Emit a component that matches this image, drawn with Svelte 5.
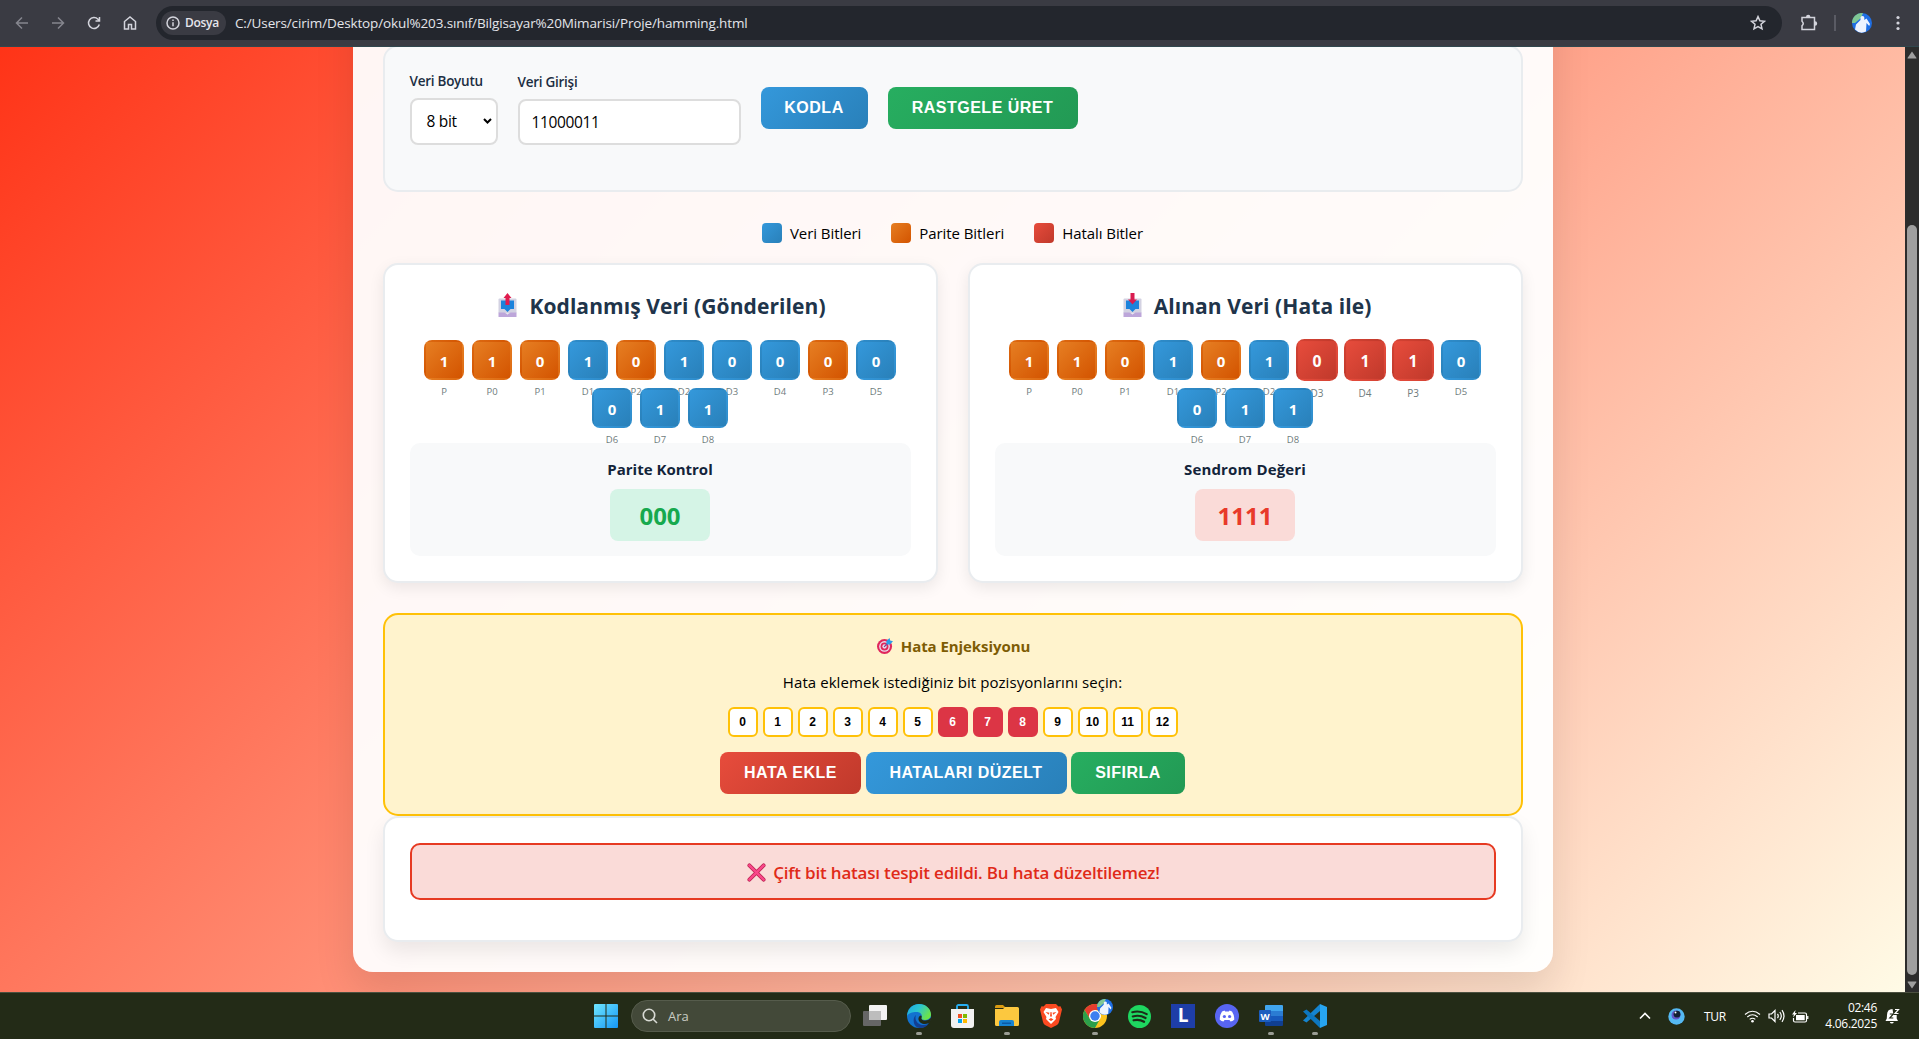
<script>
  const sent = [
    ['1', 'P'], ['1', 'P0'], ['0', 'P1'], ['1', 'D1'], ['0', 'P2'], ['1', 'D2'], ['0', 'D3'],
    ['0', 'D4'], ['0', 'P3'], ['0', 'D5'], ['0', 'D6'], ['1', 'D7'], ['1', 'D8']
  ];
  const received = [
    ['1', 'P'], ['1', 'P0'], ['0', 'P1'], ['1', 'D1'], ['0', 'P2'], ['1', 'D2'], ['0', 'D3'],
    ['1', 'D4'], ['1', 'P3'], ['0', 'D5'], ['0', 'D6'], ['1', 'D7'], ['1', 'D8']
  ];
  let errors = $state([6, 7, 8]);
  const positions = Array.from({ length: 13 }, (_, i) => i);
  const toggle = (i) => (errors = errors.includes(i) ? errors.filter((e) => e !== i) : [...errors, i]);
</script>

{#snippet tray(down)}
  <svg class="tray" width="19" height="24" viewBox="0 0 19 24">
    <rect x=".5" y="5.500" width="18" height="15" rx="1" fill="#d3d2e2" />
    <path d="M3 7.500h13v8.500h-3.500L9.500 19l-3-3H3z" fill="#1c83dc" />
    <path d="M.5 19.500h6l3 2 3-2h6V24H.5z" fill="#bda6da" />
    {#if down}
      <path d="M7.500 0h4v6.500h2.500l-4.500 5-4.500-5h2.500z" fill="#d91c50" />
    {:else}
      <path d="M9.500 0l4 5h-2v7h-4V5h-2z" fill="#e01c4e" />
    {/if}
  </svg>
{/snippet}

{#snippet bits(list, wrong)}
  <div class="bits">
    {#each list as [value, name], i}
      <div class="bit {name[0] === 'P' ? 'parity' : 'data'}" class:error={wrong.includes(i)}>
        {value}<span>{name}</span>
      </div>
    {/each}
  </div>
{/snippet}

{#snippet avatar(size)}
  <svg width={size} height={size} viewBox="0 0 20 20" stroke="none">
    <circle cx="10" cy="10" r="10" fill="#1f6fe5" />
    <path d="M0 10A10 10 0 0 1 11 0L9 5 3 10z" fill="#7fc794" />
    <path d="M3 16.500l1-5L7.500 8l1-1V4.500a2 2 0 0 1 3.800 0V7l2.200-1.500 3.500 5.500-.8 2-2.700-3-.5 8.500q-6 3-11-2z" fill="#eef4ff" />
  </svg>
{/snippet}

<div class="screen">
  <header class="toolbar">
    <div class="nav">
      <svg class="dim" width="16" height="16" viewBox="0 0 16 16"><path d="M14 8H3M8 2.500L2.500 8 8 13.500" /></svg>
      <svg class="dim" width="16" height="16" viewBox="0 0 16 16"><path d="M2 8h11M8 2.500L13.500 8 8 13.500" /></svg>
      <svg width="16" height="16" viewBox="0 0 16 16"><path d="M13.300 9.500A5.500 5.500 0 1 1 12 4.200L13.500 5.800M13.500 2v4h-4" /></svg>
      <svg width="16" height="16" viewBox="0 0 16 16"><path d="M2.500 14V6.500L8 2l5.500 4.500V14h-4V9.500h-3V14z" /></svg>
    </div>
    <div class="address">
      <span class="chip">
        <svg width="14" height="14" viewBox="0 0 14 14"><circle cx="7" cy="7" r="6" /><path d="M7 6.200v4M7 3.600v1.500" /></svg>
        <b>Dosya</b>
      </span>
      <span class="url">C:/Users/cirim/Desktop/okul%203.sınıf/Bilgisayar%20Mimarisi/Proje/hamming.html</span>
      <svg class="star" width="16" height="16" viewBox="0 0 16 16"><path d="M8 1.600l1.900 4.200 4.500.5-3.400 3 1 4.500L8 11.500l-4 2.300 1-4.500-3.400-3 4.500-.5z" /></svg>
    </div>
    <div class="tools">
      <svg width="18" height="18" viewBox="0 0 18 18"><path d="M2 3.500h12.500v12H2v-3.700q2.500-2.300 0-4.600z" /><path class="solid" d="M6 3a2.200 2.200 0 0 1 4.400 0zM15 7.300a2.200 2.200 0 0 1 0 4.400z" /></svg>
      <i class="rule"></i>
      <span class="profile">{@render avatar(20)}</span>
      <svg class="dots" width="4" height="16" viewBox="0 0 4 16"><circle cx="2" cy="2.500" r="1.600" /><circle cx="2" cy="8" r="1.600" /><circle cx="2" cy="13.500" r="1.600" /></svg>
    </div>
  </header>

  <div class="viewport">
    <div class="page">
      <main class="container">
        <section class="controls">
          <div class="field size">
            <label for="size">Veri Boyutu</label>
            <div class="select" id="size">
              <span>8 bit</span>
              <svg width="9" height="6" viewBox="0 0 9 6"><path d="M1 1l3.500 3.500L8 1" /></svg>
            </div>
          </div>
          <div class="field entry">
            <label for="entry">Veri Girişi</label>
            <input id="entry" type="text" value="11000011" />
          </div>
          <button class="btn blue kodla">KODLA</button>
          <button class="btn green random">RASTGELE ÜRET</button>
        </section>

        <div class="legend">
          <div><i class="data"></i><span>Veri Bitleri</span></div>
          <div><i class="parity"></i><span>Parite Bitleri</span></div>
          <div><i class="error"></i><span>Hatalı Bitler</span></div>
        </div>

        <div class="cards">
          <section class="card">
            <h3>{@render tray(false)}<span>Kodlanmış Veri (Gönderilen)</span></h3>
            {@render bits(sent, [])}
            <div class="info">
              <h4>Parite Kontrol</h4>
              <div class="value ok">000</div>
            </div>
          </section>
          <section class="card">
            <h3>{@render tray(true)}<span>Alınan Veri (Hata ile)</span></h3>
            {@render bits(received, errors)}
            <div class="info">
              <h4 class="syndrome">Sendrom Değeri</h4>
              <div class="value bad">1111</div>
            </div>
          </section>
        </div>

        <section class="injection">
          <h4>
            <svg width="16" height="16" viewBox="0 0 17 17">
              <circle cx="8" cy="9" r="8" fill="#e0275c" /><circle cx="8" cy="9" r="5.700" fill="#e9dcec" />
              <circle cx="8" cy="9" r="4.200" fill="#e0275c" /><circle cx="8" cy="9" r="2.300" fill="#e9dcec" />
              <path d="M7.500 9.500l5-5" stroke="#7a3b8c" stroke-width="1.200" />
              <path d="M10 7V3.200L13.300 0l.7 2.600L17 3.500 13.800 7z" fill="#2c9be8" />
            </svg>
            <span>Hata Enjeksiyonu</span>
          </h4>
          <p><span>Hata eklemek istediğiniz bit pozisyonlarını seçin:</span></p>
          <div class="positions">
            {#each positions as i}
              <button class:on={errors.includes(i)} onclick={() => toggle(i)}>{i}</button>
            {/each}
          </div>
          <div class="actions">
            <button class="btn red inject">HATA EKLE</button>
            <button class="btn blue fix">HATALARI DÜZELT</button>
            <button class="btn green reset">SIFIRLA</button>
          </div>
        </section>

        <section class="result">
          <div class="alert">
            <svg width="19" height="19" viewBox="0 0 20 20"><path d="M2.500 2.500l15 15M17.500 2.500l-15 15" stroke="#b81f4c" stroke-width="4" stroke-linecap="round" /><path d="M2.500 2.500l15 15M17.500 2.500l-15 15" stroke="#f9478a" stroke-width="2.600" stroke-linecap="round" /></svg>
            <span>Çift bit hatası tespit edildi. Bu hata düzeltilemez!</span>
          </div>
        </section>
      </main>
    </div>
    <div class="scrollbar">
      <svg width="10" height="8" viewBox="0 0 10 8"><path d="M5 .5L9.500 7q0 .5-.5.5H1q-.5 0-.5-.5z" /></svg>
      <i></i>
      <svg width="10" height="8" viewBox="0 0 10 8"><path d="M5 7.500L9.500 1q0-.5-.5-.5H1Q.5.500.5 1z" /></svg>
    </div>
  </div>

  <footer class="taskbar">
    <div class="apps">
      <svg class="win" width="24" height="24" viewBox="0 0 24 24">
        <defs><linearGradient id="wing" x1="0" y1="0" x2="1" y2="1" gradientUnits="objectBoundingBox"><stop offset="0" stop-color="#6fe6ff" /><stop offset="1" stop-color="#1596f5" /></linearGradient></defs>
        <path d="M0 1q0-1 1-1h10.500v11.500H0zM12.500 0H23q1 0 1 1v10.500H12.500zM0 12.500h11.500V24H1q-1 0-1-1zM12.500 12.500H24V23q0 1-1 1H12.500z" fill="url(#wing)" />
      </svg>
      <div class="search">
        <svg width="16" height="16" viewBox="0 0 16 16"><circle cx="7" cy="7" r="5.700" /><path d="M11 11l4 4" /></svg>
        <span>Ara</span>
      </div>
      <div class="app">
        <svg width="24" height="24" viewBox="0 0 24 24"><rect x="0" y="7" width="18" height="15" rx="1" fill="#666" /><rect x="6" y="1" width="18" height="15" rx="1" fill="#f3f3f3" /><path d="M6 7h12v9H6z" fill="#bdbdbd" /></svg>
      </div>
      <div class="app open">
        <svg width="24" height="24" viewBox="0 0 24 24">
          <defs><linearGradient id="edgeg" x1="0" y1="0" x2="1" y2=".5"><stop offset="0" stop-color="#1ba7e5" /><stop offset=".5" stop-color="#2cc5cf" /><stop offset="1" stop-color="#6be34a" /></linearGradient></defs>
          <circle cx="12" cy="12" r="12" fill="#1272cf" />
          <path d="M.3 10C1.500 3.500 6.500 0 12 0c7 0 12 5 12 10.500 0 3.500-2.800 5.500-6 5.500-2.500 0-4-1-3.500-2.200.8-1.500.5-5.800-5-5.800C5 8 1.500 9 .3 12z" fill="url(#edgeg)" />
          <path d="M9 11c-2 5 2 10 7.500 10 2.500 0 4.500-1 5.500-2-2 4-6 5-9 5C6 24 5 14 9 11z" fill="#123f93" />
          <path d="M14.500 13.800c-.6 1.500 1 2.700 4 2.700 2 0 3.500-.7 5-2.500 1 0 .5 3.500-1.500 5-5 2.500-10 0-10.500-3.500-.3-2 1-4 2.500-4 .8.500.8 1.500.5 2.300z" fill="#232b17" />
        </svg>
      </div>
      <div class="app">
        <svg width="24" height="24" viewBox="0 0 24 24"><path d="M6 6V2.500Q6 1 7.500 1h8Q17 1 17 2.500V6" fill="none" stroke="#27aef2" stroke-width="1.800" /><path d="M0 5h23v16q0 3-3 3H3q-3 0-3-3z" fill="#f2f2f2" /><path d="M7 10h4v4H7z" fill="#f25022" /><path d="M12 10h4v4h-4z" fill="#7fba00" /><path d="M7 15h4v4H7z" fill="#00a4ef" /><path d="M12 15h4v4h-4z" fill="#ffb900" /></svg>
      </div>
      <div class="app open">
        <svg width="24" height="24" viewBox="0 0 24 24"><path d="M0 2.500Q0 1 1.500 1H8l3 3H0z" fill="#d89a12" /><path d="M0 5h8l2-2h12.500Q24 3 24 4.500v16q0 1.500-1.500 1.500h-21Q0 22 0 20.500z" fill="#fcc83f" /><path d="M4 22v-4q0-2 2-2h11q2 0 2 2v4z" fill="#1784d1" /><path d="M7 18.500h9V20H7z" fill="#0b5aa5" /></svg>
      </div>
      <div class="app">
        <svg width="22" height="24" viewBox="0 0 22 24"><path d="M6 0h10l2.500 2.500 2-.3L22 5.500 19 18q-.5 2-2 3l-6 3-6-3q-1.500-1-2-3L0 5.500l1.500-3.300 2 .3z" fill="#fb4a21" /><path d="M6 4l5 1 5-1 2.500 4-3 5 .5 2-5 5-5-5 .5-2-3-5z" fill="#fff" /><path d="M5.500 8l4 .8-.8 2zM16.500 8l-4 .8.8 2zM8.500 15.500L11 14l2.500 1.500L11 17zM10.500 8h1l.5 4.500h-2z" fill="#fb4a21" /></svg>
      </div>
      <div class="app open">
        <svg width="24" height="24" viewBox="0 0 24 24"><circle cx="12" cy="12" r="12" fill="#fcc31e" /><path d="M1.600 6A12 12 0 0 1 22.400 6H12L7 15z" fill="#e53c2f" /><path d="M1.600 6A12 12 0 0 0 12 24l5-9H7z" fill="#2c9f4b" /><circle cx="12" cy="12" r="6" fill="#fff" /><circle cx="12" cy="12" r="4.700" fill="#3c7ff0" /></svg>
        <span class="badge">{@render avatar(16)}</span>
      </div>
      <div class="app">
        <svg width="23" height="23" viewBox="0 0 24 24"><circle cx="12" cy="12" r="12" fill="#1ed760" /><path d="M4.500 7.500q8-2 15 2M5 12q7-2 13.300 1.600M5.800 16q6-1.500 11 1.500" fill="none" stroke="#1c2b18" stroke-width="2.200" stroke-linecap="round" /></svg>
      </div>
      <div class="app"><span class="letter">L</span></div>
      <div class="app">
        <svg width="24" height="24" viewBox="0 0 24 24"><circle cx="12" cy="12" r="12" fill="#5865f2" /><path d="M9.500 6.500L7 7.500Q4.500 11.500 4.800 15.800 6.500 17.200 8.500 17.500l1-1.500h5l1 1.500q2-.3 3.700-1.700.3-4.300-2.200-8.300l-2.500-1-.6 1h-3.800z" fill="#fff" /><circle cx="9.400" cy="12.500" r="1.600" fill="#5865f2" /><circle cx="14.600" cy="12.500" r="1.600" fill="#5865f2" /></svg>
      </div>
      <div class="app open">
        <svg width="24" height="24" viewBox="0 0 24 24"><path d="M6 2q0-1 1-1h16q1 0 1 1v5H6z" fill="#41a5ee" /><path d="M6 7h18v5H6z" fill="#2b7cd3" /><path d="M6 12h18v5H6z" fill="#185abd" /><path d="M6 17h18v4q0 1-1 1H7q-1 0-1-1z" fill="#103f91" /><rect x="0" y="6" width="12" height="12" rx="1" fill="#1b5dbe" /><text x="6" y="15.500" text-anchor="middle">W</text></svg>
      </div>
      <div class="app open">
        <svg width="24" height="24" viewBox="0 0 24 24"><path d="M17 0l7 3v18l-7 3z" fill="#27a5f0" /><path d="M17 0v7L3.500 18.500 0 16.500z" fill="#1584cf" /><path d="M17 24v-7L3.500 5.500 0 7.500z" fill="#0d76bf" /></svg>
      </div>
    </div>
    <div class="system">
      <svg width="12" height="8" viewBox="0 0 12 8"><path d="M1 6.500l5-5 5 5" stroke-width="1.600" /></svg>
      <svg class="orb" width="17" height="17" viewBox="0 0 17 17"><circle cx="8.500" cy="8.500" r="8.200" fill="#55b9f3" /><circle cx="8" cy="7" r="4.500" fill="#6256c9" /><circle cx="9" cy="6.200" r="3.400" fill="#121f33" /><circle cx="7.500" cy="4.500" r="1" fill="#fff" /></svg>
      <span class="lang">TUR</span>
      <svg class="wifi" width="17" height="13" viewBox="0 0 17 13"><path d="M1 4.500q7.500-6.500 15 0M3.300 7q5.200-4.500 10.400 0M5.700 9.400q2.800-2.300 5.600 0" /><circle cx="8.500" cy="11.300" r="1.300" fill="#fff" stroke="none" /></svg>
      <svg class="vol" width="17" height="14" viewBox="0 0 17 14"><path d="M1 5v4h2.500L7 12.500v-11L3.500 5zM9.500 4.800q1.500 2.200 0 4.400M11.800 3q3 4 0 8M14 1.200q4 5.800 0 11.600" /></svg>
      <svg class="bat" width="17" height="13" viewBox="0 0 17 13"><path d="M6 3h7q1.500 0 1.500 1.500v6q0 1.500-1.500 1.500H3Q1.500 12 1.500 10.500V8M15.800 6v3" /><path d="M4 5h8.700v5.300H4zM3.500 0L0 4.500h2L1 7.500l4-4.500H3z" fill="#fff" stroke="none" /></svg>
      <div class="clock"><span>02:46</span><span>4.06.2025</span></div>
      <svg class="bell" width="15" height="16" viewBox="0 0 15 16"><path d="M7.500 1Q2 1 2 7l-.2 3.500L.5 13h12.500l-1.300-2.500V7H8.500z" fill="#fff" stroke="none" /><path d="M4.800 14h4q-.5 1.500-2 1.500t-2-1.500" fill="#fff" stroke="none" /><path d="M4.800 6h3.500l-3.500 4h3.500" stroke="#232b17" stroke-width="1.200" /><path d="M10 1.500h3.500L10 5.500h3.500" stroke="#fff" /></svg>
    </div>
  </footer>
</div>

<style>
  :global(body) { margin: 0; overflow: hidden; }
  * { box-sizing: border-box; }
  .screen {
    width: 1919px; height: 1039px; display: flex; flex-direction: column; overflow: hidden;
    font-family: "Open Sans", "Noto Sans", sans-serif; font-size: 16px; color: #000;
  }
  h3, h4, p { margin: 0; }
  svg { display: block; flex: none; }
  span { white-space: nowrap; }

  .toolbar {
    height: 47px; flex: none; background: #3a3b43; border-bottom: 1px solid #30474e; display: flex; align-items: center;
    padding: 0 16px 1px 14px;
  }
  .nav svg, .address svg, .tools > svg { fill: none; stroke: #d3d4dc; stroke-width: 1.500; }
  .nav { display: flex; gap: 20px; width: 142px; }
  .nav .dim { stroke: #85868e; }
  .address {
    height: 34px; width: 1626px; border-radius: 17px; background: #23262d; display: flex; align-items: center; padding: 0 16px 0 5px;
  }
  .chip {
    height: 24px; width: 65px; border-radius: 12px; background: #3a3b43; display: flex; align-items: center; gap: 5px; padding: 0 5px;
    font-size: 12px; color: #e6e6ec; letter-spacing: -.3px;
  }
  .chip b { font-weight: 600; }
  .url { flex: 1; margin-left: 9px; font-size: 13.500px; letter-spacing: -.130px; color: #e4e5ea; }
  .tools { display: flex; align-items: center; margin-left: 18px; flex: 1; }
  .tools .solid { fill: #d3d4dc; stroke: none; }
  .rule { width: 2px; height: 16px; background: #5a5b64; margin: 0 16px; }
  .tools > .dots { margin-left: auto; margin-right: 3px; fill: #d3d4dc; stroke: none; }

  .viewport { height: 945px; flex: none; display: flex; overflow: hidden; }
  .page {
    width: 1905px; height: 1151px; margin-top: -206px; padding: 0 352.500px 20px; display: flex; align-items: flex-end; flex: none;
    background: linear-gradient(135deg, #ff2508 0%, #ff9279 50%, #fffbe6 100%);
  }
  .container {
    width: 1200px; height: 1111px; padding: 0 30px 30px; border-radius: 20px; background: rgba(255, 255, 255, .95);
    box-shadow: 0 20px 40px rgba(0, 0, 0, .1); display: flex; flex-direction: column; justify-content: flex-end;
  }
  .controls {
    height: 147px; border: 2px solid #e9ecef; border-radius: 15px; background: #f8f9fa; padding: 24px 25px; display: flex; align-items: flex-start;
  }
  label { font-size: 13.500px; font-weight: 600; letter-spacing: -.260px; color: #1c2e42; display: block; height: 27px; line-height: 20px; white-space: nowrap; }
  .size { width: 88px; margin-right: 20px; }
  .entry { width: 223px; margin-right: 20px; padding-top: 1px; }
  .select {
    height: 47px; border: 2px solid #ddd; border-radius: 8px; background: #fff; display: flex; align-items: center; justify-content: space-between;
    padding: 0 4px 1px 15px; font-size: 15.500px; letter-spacing: -.3px;
  }
  .select path { fill: none; stroke: #000; stroke-width: 2; }
  input {
    width: 223px; height: 46px; border: 2px solid #ddd; border-radius: 8px; background: #fff; padding: 0 12px 1px;
    font: 15.500px "Open Sans", sans-serif; letter-spacing: -.350px; color: #000; display: block;
  }
  .btn {
    height: 42px; border: 0; border-radius: 8px; padding: 0; color: #fff; font: bold 16px "Liberation Sans", sans-serif; letter-spacing: .5px;
  }
  .kodla { width: 107px; margin: 16px 20px 0 0; }
  .random { width: 190px; margin-top: 16px; }
  .blue, .data { background: linear-gradient(135deg, #3498db, #2980b9); }
  .green { background: linear-gradient(135deg, #27ae60, #229954); }
  .red { background: linear-gradient(135deg, #e74c3c, #c0392b); }
  .parity { background: linear-gradient(135deg, #e67e22, #d35400); }
  .error { background: linear-gradient(135deg, #e74c3c, #c0392b); }

  .legend { height: 71px; padding-top: 10px; display: flex; justify-content: center; align-items: center; gap: 30px; flex: none; }
  .legend div { display: flex; align-items: center; gap: 8px; font-size: 15px; letter-spacing: -.070px; }
  .legend i { width: 20px; height: 20px; border-radius: 4px; }

  .cards { display: flex; gap: 30px; height: 320px; flex: none; }
  .card { flex: 1; border: 2px solid #e9ecef; border-radius: 15px; background: #fff; padding: 25px; box-shadow: 0 5px 15px rgba(0, 0, 0, .08); }
  h3 { height: 31px; padding-left: 4px; display: flex; align-items: center; justify-content: center; gap: 12px; font-size: 21px; letter-spacing: .080px; color: #20344a; }
  .tray { margin-bottom: 1px; }
  .bits { height: 122px; padding: 19px 0 0; display: flex; flex-wrap: wrap; gap: 8px; justify-content: center; align-content: flex-start; }
  .bit {
    width: 40px; height: 40px; border-radius: 8px; border: 2px solid transparent; color: #fff; font-size: 15px; font-weight: 700;
    display: flex; align-items: center; justify-content: center; position: relative; padding-top: 2px;
  }
  .bit span { position: absolute; left: 0; right: 0; bottom: -21px; text-align: center; font-size: 9.500px; font-weight: 400; line-height: 14px; color: #6f7c7d; }
  .bit.error { transform: scale(1.05); }
  .info { height: 113px; background: #f8f9fa; border-radius: 10px; display: flex; flex-direction: column; align-items: center; padding-top: 14px; }
  .info h4 { font-size: 15px; line-height: 24px; color: #13243a; margin-bottom: 8px; white-space: nowrap; }
  .info .syndrome { letter-spacing: .150px; }
  .value { width: 100px; height: 52px; border-radius: 8px; font-size: 24px; font-weight: 700; line-height: 54px; text-align: center; }
  .ok { background: #d5f4e6; color: #16a94e; }
  .bad { background: #fadbd8; color: #e8392a; }

  .injection {
    height: 203px; flex: none; margin-top: 30px; border: 2px solid #ffc107; border-radius: 15px; background: #fff3cd;
    display: flex; flex-direction: column; align-items: center; padding-top: 18px;
  }
  .injection h4 { height: 26px; padding-left: 2px; display: flex; align-items: center; gap: 8px; font-size: 15px; letter-spacing: -.070px; color: #7e5c04; }
  .injection p { height: 48px; line-height: 46px; font-size: 15px; letter-spacing: .070px; }
  .positions { display: flex; gap: 5px; }
  .positions button {
    width: 30px; height: 30px; padding: 0; border: 2px solid #ffc107; border-radius: 6px; background: #fff; color: #000;
    font: bold 12px "Liberation Sans", sans-serif;
  }
  .positions button.on { background: #dc3545; border-color: #dc3545; color: #fff; }
  .actions { display: flex; gap: 4.500px; margin-top: 15px; }
  .inject { width: 141px; }
  .fix { width: 201px; }
  .reset { width: 114px; }

  .result { height: 126px; flex: none; border: 2px solid #e9ecef; border-radius: 15px; background: #fff; padding: 25px; box-shadow: 0 10px 20px rgba(0, 0, 0, .08); }
  .alert {
    height: 57px; border: 2px solid #e63a22; border-radius: 10px; background: #fadbd8; color: #e02a18; font-size: 17px; font-weight: 600;
    letter-spacing: -.190px; display: flex; align-items: center; justify-content: center; gap: 7px; padding: 1px 0 0 2px;
  }
  .alert path { fill: none; }

  .scrollbar { width: 14px; flex: none; background: #2c2c2c; display: flex; flex-direction: column; align-items: center; padding: 4px 0 3px; }
  .scrollbar svg { fill: #9f9f9f; }
  .scrollbar i { width: 10px; height: 750px; margin: 166px 0 6px; border-radius: 5px; background: #9f9f9f; }

  .taskbar { height: 47px; flex: none; background: #232b17; border-top: 1px solid #4b5040; display: flex; color: #fff; }
  .apps { display: flex; align-items: center; margin-left: 594px; }
  .search {
    width: 220px; height: 32px; margin: 0 14px 0 13px; border: 1px solid #565c4c; border-radius: 16px; background: #434939;
    display: flex; align-items: center; gap: 10px; padding-left: 10px; font-size: 13px; color: #c9ccc3;
  }
  .search svg { fill: none; stroke: #d8dad4; stroke-width: 1.600; }
  .app { width: 44px; height: 46px; display: flex; align-items: center; justify-content: center; position: relative; }
  .app.open::after { content: ""; position: absolute; left: 19px; bottom: 4px; width: 6px; height: 3px; border-radius: 2px; background: #9a9d94; }
  .badge { position: absolute; left: 24px; top: 6px; }
  .search + .app { margin-left: -12px; }
  .letter { width: 24px; height: 24px; background: #1e3ea8; font: bold 19px/23px "Open Sans", sans-serif; text-align: center; }
  .app text { font: bold 9.500px "Open Sans", sans-serif; fill: #fff; }
  .system { margin-left: auto; display: flex; align-items: center; padding-right: 19px; }
  .system svg { fill: none; stroke: #fff; stroke-width: 1.200; }
  .system .orb { margin-left: 17px; stroke: none; }
  .lang { margin-left: 19px; font-size: 12px; letter-spacing: -.3px; width: 24px; }
  .wifi { margin-left: 16px; }
  .vol { margin-left: 7px; }
  .bat { margin-left: 7px; }
  .clock { width: 68px; display: flex; flex-direction: column; align-items: flex-end; font-size: 12px; line-height: 16px; letter-spacing: -.3px; }
  .bell { margin-left: 8px; }
</style>
